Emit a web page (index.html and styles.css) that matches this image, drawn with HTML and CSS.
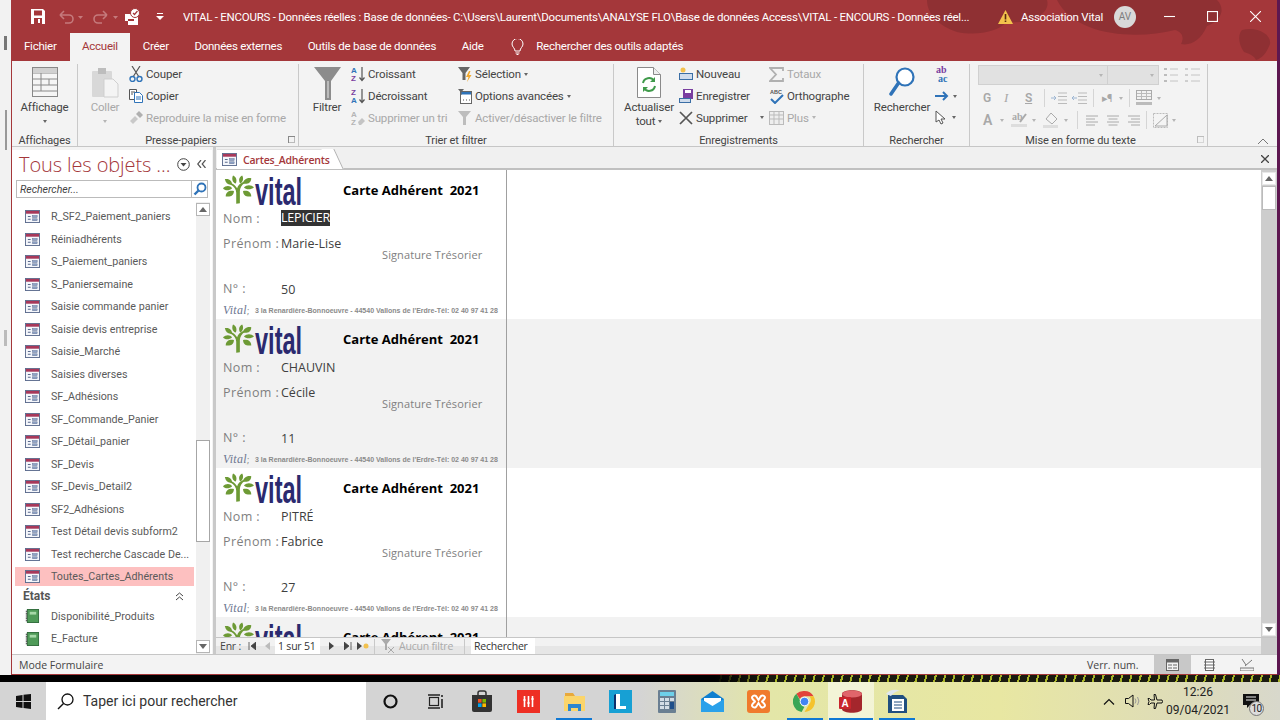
FILE: index.html
```html
<!DOCTYPE html>
<html lang="fr">
<head>
<meta charset="utf-8">
<title>VITAL - ENCOURS</title>
<link rel="stylesheet" href="styles.css">
</head>
<body>
<svg class="defs" width="0" height="0">
  <defs>
    <symbol id="form" viewBox="0 0 16 14">
      <rect x=".5" y=".5" width="15" height="13" fill="#f4f6fb" stroke="#5a6a8c"/>
      <rect x="1" y="1" width="14" height="3" fill="#a8385a"/>
      <path d="M3 7h3M3 10h3" stroke="#5a6a8c" stroke-width="1.2"/>
      <rect x="8" y="6" width="5" height="2" fill="#8fa4c8" stroke="#5a6a8c" stroke-width=".5"/>
      <rect x="8" y="9.5" width="5" height="2" fill="#8fa4c8" stroke="#5a6a8c" stroke-width=".5"/>
    </symbol>
    <symbol id="report" viewBox="0 0 14 15">
      <rect x="1.5" y=".5" width="12" height="14" fill="#4f9a58" stroke="#2f6b3a"/>
      <path d="M4 3h7v3H4z" fill="#a7d8a8"/>
      <path d="M.5 2v11" stroke="#333" stroke-dasharray="1 1" stroke-width="1.4"/>
    </symbol>
    <symbol id="tree" viewBox="0 0 34 32">
      <path d="M14.500 31V19C14.500 15 12 12 8 10l1-1.500c3 1 5 3 6.500 5.500 1-3 3-5 7-7l1 1.500c-3 2-5 5-5 9v13z" fill="#6d9a35"/>
      <path d="M11 0c3 1 5 5 3 9-3-1-5-5-3-9zM2 4c5-1 8 2 8 6-4 1-7-1-8-6zM0 14c3-3 8-3 10 0-3 3-8 3-10 0zM3 23c0-5 4-7 9-6 0 5-4 7-9 6zM21 0c2 3 1 7-2 9-2-3-2-7 2-9zM31 3c0 5-4 7-9 6 0-4 4-7 9-6zM34 13c-3 3-9 3-11 0 3-3 8-3 11 0zM31 23c-5 1-9-1-9-6 5-1 9 1 9 6z" fill="#6d9a35"/>
    </symbol>
    <symbol id="tri-up" viewBox="0 0 10 6"><path d="M5 0l5 6H0z" fill="#666"/></symbol>
    <symbol id="tri-down" viewBox="0 0 10 6"><path d="M0 0h10L5 6z" fill="#666"/></symbol>
  </defs>
</svg>

<div class="screen">
  <div class="desktop">
    <div class="back-app"><span class="speck speck-a"></span><span class="speck speck-b"></span><span class="speck speck-c"></span></div>

    <div class="window">
      <div class="head">
        <svg class="head-art" width="420" height="61" viewBox="0 0 420 61">
          <path d="M70 0h120c4 14-16 24-40 22-10 10-30 14-50 10C82 26 70 14 70 0zM200 0h160c8 8 6 20-10 26-6 14-16 20-26 18 4-8 0-12-6-14-40 10-100 6-118-30zM385 30c14-4 30 4 28 14-4 10-8 14-14 16-2-4-6-6-12-8-6-8-6-18-2-22z" fill="#8f3033"/>
        </svg>
        <div class="titlebar">
          <div class="qat">
            <svg class="qat-save" width="14" height="15" viewBox="0 0 14 15"><path d="M0 0h12l2 2v13H0z" fill="#fff"/><rect x="3" y="1.5" width="8" height="5" fill="#a4373a"/><rect x="3" y="9" width="8" height="6" fill="#a4373a"/><rect x="7" y="10" width="2" height="4" fill="#fff"/></svg>
            <svg class="qat-undo" width="30" height="14" viewBox="0 0 30 14"><path d="M2 5h9a4 4 0 0 1 0 8H7M2 5l4-4M2 5l4 4" fill="none" stroke="#c57a7c" stroke-width="1.6"/><path d="M20 6h5l-2.500 3z" fill="#c57a7c"/></svg>
            <svg class="qat-redo" width="30" height="14" viewBox="0 0 30 14"><path d="M14 5H5a4 4 0 0 0 0 8h4M14 5l-4-4M14 5l-4 4" fill="none" stroke="#c57a7c" stroke-width="1.600"/><path d="M20 6h5l-2.500 3z" fill="#c57a7c"/></svg>
            <svg class="qat-touch" width="18" height="18" viewBox="0 0 18 18"><path d="M2 6h8v3h5v8H5v-4H2z" fill="#fff"/><circle cx="12" cy="5" r="4.500" fill="#fff" stroke="#a4373a"/><path d="M10 5l1.500 1.500L14.500 3" fill="none" stroke="#a4373a" stroke-width="1.200"/><rect x="5" y="11" width="6" height="2" fill="#a4373a"/></svg>
            <svg class="qat-more" width="8" height="7" viewBox="0 0 8 7"><path d="M1 0h6v1H1zM0 3h8L4 7z" fill="#fff"/></svg>
          </div>
          <div class="doc-title">VITAL - ENCOURS - Données réelles : Base de données- C:\Users\Laurent\Documents\ANALYSE FLO\Base de données Access\VITAL - ENCOURS - Données réel...</div>
          <svg class="warn" width="15" height="14" viewBox="0 0 15 14"><path d="M7.500 0L15 14H0z" fill="#f3c34c"/><path d="M6.700 4h1.600v5.500H6.700zM6.700 10.500h1.600V12H6.700z" fill="#5a2a10"/></svg>
          <div class="account">Association Vital</div>
          <div class="avatar">AV</div>
          <div class="winctl">
            <svg width="10" height="10" viewBox="0 0 10 10"><path d="M0 5h10" stroke="#fff"/></svg>
            <svg width="10" height="10" viewBox="0 0 10 10"><rect x=".5" y=".5" width="9" height="9" fill="none" stroke="#fff"/></svg>
            <svg width="10" height="10" viewBox="0 0 10 10"><path d="M0 0l10 10M10 0L0 10" stroke="#fff"/></svg>
          </div>
        </div>
        <div class="tabs">
          <div class="tab tab-file">Fichier</div>
          <div class="tab tab-on">Accueil</div>
          <div class="tab">Créer</div>
          <div class="tab">Données externes</div>
          <div class="tab">Outils de base de données</div>
          <div class="tab">Aide</div>
          <svg class="bulb" width="13" height="16" viewBox="0 0 13 16"><path d="M4 12c0-3-3-4-3-7a5.500 5.500 0 0 1 11 0c0 3-3 4-3 7zM4.500 14h4M5.500 15.500h2" fill="none" stroke="#fff"/></svg>
          <div class="tab tab-tell">Rechercher des outils adaptés</div>
        </div>
      </div>

      <div class="ribbon">
        <section class="group g-views">
          <div class="group-body">
            <div class="big big-views">
              <div class="big-icon">
                <svg width="26" height="30" viewBox="0 0 26 30"><rect x=".5" y=".5" width="25" height="29" fill="#f5f5f5" stroke="#888"/><path d="M1 6h24M1 12h24M1 18h24M1 24h24M9 6v18M17 12v6" stroke="#888"/><rect x="1" y="1" width="24" height="5" fill="#d0d0d0"/></svg>
              </div>
              <div class="big-label">Affichage</div>
              <span class="caret caret-line"></span>
            </div>
          </div>
          <div class="group-label">Affichages</div>
        </section>

        <section class="group g-clip">
          <div class="group-body">
            <div class="big big-paste off">
              <div class="big-icon">
                <svg width="28" height="31" viewBox="0 0 28 31"><rect x="1" y="4" width="20" height="26" rx="1" fill="#d8d8d8"/><rect x="7" y="1" width="8" height="6" fill="#bdbdbd"/><path d="M13 12h9l5 5v13H13z" fill="#f4f4f4" stroke="#cfcfcf"/></svg>
              </div>
              <div class="big-label">Coller</div>
              <span class="caret caret-line caret-off"></span>
            </div>
            <div class="col col-clip">
              <div class="sm"><svg class="ic" width="14" height="16" viewBox="0 0 14 16"><path d="M3 0l7 11M11 0L4 11" stroke="#555" stroke-width="1.200"/><circle cx="3.500" cy="13" r="2.500" fill="none" stroke="#2f73b8" stroke-width="1.400"/><circle cx="10.500" cy="13" r="2.500" fill="none" stroke="#2f73b8" stroke-width="1.400"/></svg>Couper</div>
              <div class="sm"><svg class="ic" width="14" height="14" viewBox="0 0 14 14"><path d="M.5.500h7v10h-7z" fill="#fff" stroke="#555"/><path d="M5.500 3.500h5l3 3v7h-8z" fill="#fff" stroke="#2f73b8"/><path d="M2 3h4M2 5h2" stroke="#555"/><path d="M7 8h5M7 10h5" stroke="#2f73b8"/></svg>Copier</div>
              <div class="sm off"><svg class="ic" width="14" height="14" viewBox="0 0 14 14"><path d="M1 10l5-5 3 3-5 5z" fill="#c9c9c9"/><path d="M7 3l3-3 4 4-3 3z" fill="#b0b0b0"/></svg>Reproduire la mise en forme</div>
            </div>
          </div>
          <div class="group-label">Presse-papiers<span class="launcher"></span></div>
        </section>

        <section class="group g-sort">
          <div class="group-body">
            <div class="big big-filter">
              <div class="big-icon">
                <svg width="27" height="33" viewBox="0 0 27 33"><path d="M0 0h27L17 14v19h-6V14z" fill="#8c8c8c"/><path d="M13 14h2v17h-2z" fill="#bbb"/></svg>
              </div>
              <div class="big-label">Filtrer</div>
            </div>
            <div class="col col-sort">
              <div class="sm"><svg class="ic" width="14" height="16" viewBox="0 0 14 16"><text class="az az-blue" x="0" y="7">A</text><text class="az az-purple" x="0" y="15">Z</text><path d="M11 1v13M8.500 11.500L11 14.500l2.500-3" fill="none" stroke="#555" stroke-width="1.200"/></svg>Croissant</div>
              <div class="sm"><svg class="ic" width="14" height="16" viewBox="0 0 14 16"><text class="az az-purple" x="0" y="7">Z</text><text class="az az-blue" x="0" y="15">A</text><path d="M11 1v13M8.500 11.500L11 14.500l2.500-3" fill="none" stroke="#555" stroke-width="1.200"/></svg>Décroissant</div>
              <div class="sm off"><svg class="ic" width="14" height="16" viewBox="0 0 14 16"><text class="az az-grey" x="0" y="7">A</text><text class="az az-grey" x="0" y="15">Z</text><path d="M7 12l4-4 3 3-4 4H8z" fill="#c4c4c4"/></svg>Supprimer un tri</div>
            </div>
            <div class="col col-filter">
              <div class="sm"><svg class="ic" width="14" height="15" viewBox="0 0 14 15"><path d="M0 0h12L7.500 6v7h-3V6z" fill="#666"/><path d="M11 4L8 10h2.500L9 15l4.500-7H11l1.500-4z" fill="#f0a830"/></svg>Sélection<span class="caret"></span></div>
              <div class="sm"><svg class="ic" width="14" height="15" viewBox="0 0 14 15"><rect x="2.500" y="2.500" width="11" height="12" fill="#fff" stroke="#666"/><rect x="3" y="3" width="10" height="2.500" fill="#2f73b8"/><path d="M0 0h6L3.500 3v3h-1V3z" fill="#666"/><path d="M5 11h1M8 11h1M11 11h1" stroke="#555"/></svg>Options avancées<span class="caret"></span></div>
              <div class="sm off"><svg class="ic" width="14" height="15" viewBox="0 0 14 15"><path d="M0 1h13L8 7v8H5V7z" fill="#bdbdbd"/></svg>Activer/désactiver le filtre</div>
            </div>
          </div>
          <div class="group-label">Trier et filtrer</div>
        </section>

        <section class="group g-records">
          <div class="group-body">
            <div class="big big-refresh">
              <div class="big-icon">
                <svg width="24" height="31" viewBox="0 0 24 31"><path d="M.5.500h16l7 7v23H.500z" fill="#fff" stroke="#8a8a8a"/><path d="M16.500.5v7h7" fill="#eee" stroke="#8a8a8a"/><path d="M6 16a6 6 0 0 1 11-2M18 19a6 6 0 0 1-11 2" fill="none" stroke="#3f9a4a" stroke-width="2"/><path d="M18 10v5h-5zM6 25v-5h5z" fill="#3f9a4a"/></svg>
              </div>
              <div class="big-label">Actualiser</div>
              <div class="big-label">tout<span class="caret"></span></div>
            </div>
            <div class="col col-rec">
              <div class="sm"><svg class="ic" width="14" height="14" viewBox="0 0 14 14"><rect x=".5" y="6.500" width="13" height="6" fill="#cfdcec" stroke="#3a6ea5"/><circle cx="4" cy="3" r="2.500" fill="#f2c14e"/></svg>Nouveau</div>
              <div class="sm"><svg class="ic" width="14" height="15" viewBox="0 0 14 15"><rect x="4" y="0" width="10" height="10" fill="#7a3fa0"/><rect x="6" y="1" width="6" height="3" fill="#fff"/><rect x=".5" y="9.500" width="11" height="4" fill="#cfdcec" stroke="#3a6ea5"/></svg>Enregistrer</div>
              <div class="sm"><svg class="ic" width="14" height="14" viewBox="0 0 14 14"><path d="M1 1l12 12M13 1L1 13" stroke="#555" stroke-width="1.700"/></svg>Supprimer<span class="caret caret-far"></span></div>
            </div>
            <div class="col col-tot">
              <div class="sm off"><svg class="ic ic-wide" width="15" height="15" viewBox="0 0 15 15"><path d="M14 4V1H1l6 6.500L1 14h13v-3" fill="none" stroke="#b0b0b0" stroke-width="1.800"/></svg>Totaux</div>
              <div class="sm"><svg class="ic ic-wide" width="15" height="16" viewBox="0 0 15 16"><text class="abc" x="1" y="6">ABC</text><path d="M2 11l4 4 8-8" fill="none" stroke="#2f73b8" stroke-width="2"/></svg>Orthographe</div>
              <div class="sm off"><svg class="ic ic-wide" width="15" height="14" viewBox="0 0 15 14"><rect x=".5" y=".5" width="14" height="13" fill="#eee" stroke="#bbb"/><path d="M1 4h13M1 8h13M5 1v12M10 1v12" stroke="#bbb"/></svg>Plus<span class="caret caret-off"></span></div>
            </div>
          </div>
          <div class="group-label">Enregistrements</div>
        </section>

        <section class="group g-find">
          <div class="group-body">
            <div class="big big-find">
              <div class="big-icon">
                <svg width="26" height="33" viewBox="0 0 26 33"><circle cx="16" cy="10" r="8.500" fill="#fff" stroke="#2f73b8" stroke-width="2.200"/><path d="M9.500 16L2 27" stroke="#2f73b8" stroke-width="3.500" stroke-linecap="round"/></svg>
              </div>
              <div class="big-label">Rechercher</div>
            </div>
            <div class="col col-find">
              <div class="sm"><svg width="15" height="18" viewBox="0 0 15 18"><text class="abt abt-p" x="1" y="8">ab</text><text class="abt abt-b" x="3" y="17">ac</text></svg></div>
              <div class="sm"><svg width="15" height="10" viewBox="0 0 15 10"><path d="M0 5h12M8 1l4 4-4 4" fill="none" stroke="#2f73b8" stroke-width="2"/></svg><span class="caret"></span></div>
              <div class="sm"><svg width="11" height="15" viewBox="0 0 11 15"><path d="M1 1v11l3-2 2 4 2-1-2-4h4z" fill="#fff" stroke="#555"/></svg><span class="caret caret-wide"></span></div>
            </div>
          </div>
          <div class="group-label">Rechercher</div>
        </section>

        <section class="group g-format">
          <div class="group-body">
            <div class="fmt">
              <div class="fmt-top">
                <div class="combo combo-font"><span class="caret caret-off"></span></div>
                <div class="combo combo-size"><span class="caret caret-off"></span></div>
                <svg class="lists" width="36" height="16" viewBox="0 0 36 16"><path d="M0 2h3M0 8h3M0 14h3" stroke="#aaa" stroke-width="1.500"/><path d="M6 2h8M6 8h8M6 14h8M27 2h9M27 8h9M27 14h9" stroke="#c4c4c4"/><path d="M21 2h3M21 8h3M21 14h3" stroke="#aaa"/></svg>
              </div>
              <div class="fmt-row fmt-row-2">
                <span class="fmt-g">G</span><span class="fmt-i">I</span><span class="fmt-s">S</span>
                <i class="fmt-sep"></i>
                <svg width="36" height="13" viewBox="0 0 36 13"><path d="M7 1h9M7 4.500h9M7 8h9M7 11.500h9M27 1h9M27 4.500h9M27 8h9M27 11.500h9" stroke="#bbb"/><path d="M0 6h5M3 4l2 2-2 2M26 6h-5M23 4l-2 2 2 2" fill="none" stroke="#9db6d3"/></svg>
                <i class="fmt-sep"></i>
                <span class="fmt-para">▸¶</span><span class="caret caret-off caret-m8"></span>
                <i class="fmt-sep"></i>
                <svg width="18" height="16" viewBox="0 0 18 16"><rect x=".5" y=".5" width="15" height="9" fill="#f2f2f2" stroke="#aaa"/><path d="M1 3.500h14M1 6.500h14M5.500 1v8M10.500 1v8" stroke="#bbb"/><rect y="12" width="16" height="3" fill="#bbb"/></svg><span class="caret caret-off"></span>
              </div>
              <div class="fmt-row fmt-row-3">
                <span class="fmt-a">A</span><span class="caret caret-off caret-m8"></span>
                <svg width="18" height="16" viewBox="0 0 18 16"><text class="abt abt-g" x="1" y="8">ab</text><path d="M9 10l6-8" stroke="#aaa" stroke-width="2"/><rect y="12" width="16" height="3" fill="#ddd"/></svg><span class="caret caret-off"></span>
                <svg width="18" height="16" viewBox="0 0 18 16"><path d="M3 7l5-6 6 6-5 5z" fill="#f4f4f4" stroke="#aaa"/><rect y="13" width="15" height="3" fill="#ddd"/></svg><span class="caret caret-off"></span>
                <i class="fmt-sep fmt-sep-a"></i>
                <svg class="align" width="54" height="11" viewBox="0 0 54 11"><path d="M0 1h12M0 4h9M0 7h12M0 10h9M21 1h12M22.500 4h9M21 7h12M22.500 10h9M42 1h12M45 4h9M42 7h12M45 10h9" stroke="#aaa"/></svg>
                <i class="fmt-sep"></i>
                <svg class="fmt-borders" width="16" height="15" viewBox="0 0 16 15"><rect x=".5" y=".5" width="14" height="14" fill="#f4f4f4" stroke="#bbb" stroke-dasharray="2 1"/><path d="M2 13L14 2M14 2v11H2" fill="none" stroke="#aaa"/></svg><span class="caret caret-off"></span>
              </div>
            </div>
          </div>
          <div class="group-label">Mise en forme du texte<span class="launcher launcher-off"></span></div>
        </section>

        <svg class="collapse" width="10" height="6" viewBox="0 0 10 6"><path d="M0 6l5-5 5 5" fill="none" stroke="#777"/></svg>
      </div>

      <div class="workspace">
        <aside class="nav">
          <div class="nav-head">
            <div class="nav-title">Tous les objets ...</div>
            <svg class="nav-menu" width="13" height="13" viewBox="0 0 13 13"><circle cx="6.500" cy="6.500" r="5.800" fill="none" stroke="#444"/><path d="M3.500 5h6l-3 3.500z" fill="#444"/></svg>
            <svg class="nav-shut" width="9" height="8" viewBox="0 0 9 8"><path d="M4 0L.7 4 4 8M8.500 0L5.200 4l3.300 4" fill="none" stroke="#555" stroke-width="1.200"/></svg>
          </div>
          <div class="nav-search">
            <div class="nav-search-text">Rechercher...</div>
            <div class="nav-search-btn"><svg width="14" height="14" viewBox="0 0 14 14"><circle cx="8.500" cy="5.500" r="4" fill="none" stroke="#2f73b8" stroke-width="1.800"/><path d="M5.500 8.500L1.500 12.500" stroke="#2f73b8" stroke-width="2.400"/></svg></div>
          </div>
          <div class="nav-body">
            <div class="nav-list">
              <div class="nav-item"><svg class="nav-ic" width="15" height="13"><use href="#form"/></svg>R_SF2_Paiement_paniers</div>
              <div class="nav-item"><svg class="nav-ic" width="15" height="13"><use href="#form"/></svg>Réiniadhérents</div>
              <div class="nav-item"><svg class="nav-ic" width="15" height="13"><use href="#form"/></svg>S_Paiement_paniers</div>
              <div class="nav-item"><svg class="nav-ic" width="15" height="13"><use href="#form"/></svg>S_Paniersemaine</div>
              <div class="nav-item"><svg class="nav-ic" width="15" height="13"><use href="#form"/></svg>Saisie commande panier</div>
              <div class="nav-item"><svg class="nav-ic" width="15" height="13"><use href="#form"/></svg>Saisie devis entreprise</div>
              <div class="nav-item"><svg class="nav-ic" width="15" height="13"><use href="#form"/></svg>Saisie_Marché</div>
              <div class="nav-item"><svg class="nav-ic" width="15" height="13"><use href="#form"/></svg>Saisies diverses</div>
              <div class="nav-item"><svg class="nav-ic" width="15" height="13"><use href="#form"/></svg>SF_Adhésions</div>
              <div class="nav-item"><svg class="nav-ic" width="15" height="13"><use href="#form"/></svg>SF_Commande_Panier</div>
              <div class="nav-item"><svg class="nav-ic" width="15" height="13"><use href="#form"/></svg>SF_Détail_panier</div>
              <div class="nav-item"><svg class="nav-ic" width="15" height="13"><use href="#form"/></svg>SF_Devis</div>
              <div class="nav-item"><svg class="nav-ic" width="15" height="13"><use href="#form"/></svg>SF_Devis_Detail2</div>
              <div class="nav-item"><svg class="nav-ic" width="15" height="13"><use href="#form"/></svg>SF2_Adhésions</div>
              <div class="nav-item"><svg class="nav-ic" width="15" height="13"><use href="#form"/></svg>Test Détail devis subform2</div>
              <div class="nav-item"><svg class="nav-ic" width="15" height="13"><use href="#form"/></svg>Test recherche Cascade De...</div>
              <div class="nav-item nav-item-on"><svg class="nav-ic" width="15" height="13"><use href="#form"/></svg>Toutes_Cartes_Adhérents</div>
              <div class="nav-section"><span>États</span><svg class="nav-fold" width="9" height="9" viewBox="0 0 9 9"><path d="M1 4l3.500-3L8 4M1 8l3.500-3L8 8" fill="none" stroke="#444"/></svg></div>
              <div class="nav-item"><svg class="nav-ic" width="13" height="14"><use href="#report"/></svg>Disponibilité_Produits</div>
              <div class="nav-item"><svg class="nav-ic" width="13" height="14"><use href="#report"/></svg>E_Facture</div>
              <div class="nav-item"><svg class="nav-ic" width="13" height="14"><use href="#report"/></svg></div>
            </div>
            <div class="vbar vbar-nav">
              <div class="vbtn"><svg width="8" height="5"><use href="#tri-up"/></svg></div>
              <div class="vtrack vtrack-nav"><div class="vthumb vthumb-nav"></div></div>
              <div class="vbtn"><svg width="8" height="5"><use href="#tri-down"/></svg></div>
            </div>
          </div>
        </aside>
        <div class="splitter"></div>

        <main class="main">
          <div class="doc-tabs">
            <div class="doc-tab"><svg width="15" height="13"><use href="#form"/></svg><span>Cartes_Adhérents</span></div>
            <svg class="doc-close" width="8" height="8" viewBox="0 0 8 8"><path d="M0 0l8 8M8 0L0 8" stroke="#444" stroke-width="1.300"/></svg>
          </div>
          <div class="form-area">
            <div class="records">
              <article class="record">
                <div class="card">
                  <div class="card-head"><svg class="logo" width="80" height="32" viewBox="0 0 80 32"><use href="#tree" width="31" height="32"/><text class="logo-text" transform="translate(32 31) scale(.62 1)">vital</text></svg><div class="card-title">Carte Adhérent&nbsp; 2021</div></div>
                  <div class="field field-name"><span class="flabel">Nom :</span><span class="fval fval-sel">LEPICIER</span></div>
                  <div class="field field-first"><span class="flabel">Prénom :</span><span class="fval">Marie-Lise</span></div>
                  <div class="signature">Signature Trésorier</div>
                  <div class="field field-num"><span class="flabel">N° :</span><span class="fval fval-num">50</span></div>
                  <div class="card-foot"><span class="foot-vital">Vital</span><span class="foot-sep">;</span><span class="foot-addr">3 la Renardière-Bonnoeuvre - 44540 Vallons de l'Erdre-Tél: 02 40 97 41 28</span></div>
                </div>
              </article>
              <article class="record record-alt">
                <div class="card">
                  <div class="card-head"><svg class="logo" width="80" height="32" viewBox="0 0 80 32"><use href="#tree" width="31" height="32"/><text class="logo-text" transform="translate(32 31) scale(.62 1)">vital</text></svg><div class="card-title">Carte Adhérent&nbsp; 2021</div></div>
                  <div class="field field-name"><span class="flabel">Nom :</span><span class="fval">CHAUVIN</span></div>
                  <div class="field field-first"><span class="flabel">Prénom :</span><span class="fval">Cécile</span></div>
                  <div class="signature">Signature Trésorier</div>
                  <div class="field field-num"><span class="flabel">N° :</span><span class="fval fval-num">11</span></div>
                  <div class="card-foot"><span class="foot-vital">Vital</span><span class="foot-sep">;</span><span class="foot-addr">3 la Renardière-Bonnoeuvre - 44540 Vallons de l'Erdre-Tél: 02 40 97 41 28</span></div>
                </div>
              </article>
              <article class="record">
                <div class="card">
                  <div class="card-head"><svg class="logo" width="80" height="32" viewBox="0 0 80 32"><use href="#tree" width="31" height="32"/><text class="logo-text" transform="translate(32 31) scale(.62 1)">vital</text></svg><div class="card-title">Carte Adhérent&nbsp; 2021</div></div>
                  <div class="field field-name"><span class="flabel">Nom :</span><span class="fval">PITRÉ</span></div>
                  <div class="field field-first"><span class="flabel">Prénom :</span><span class="fval">Fabrice</span></div>
                  <div class="signature">Signature Trésorier</div>
                  <div class="field field-num"><span class="flabel">N° :</span><span class="fval fval-num">27</span></div>
                  <div class="card-foot"><span class="foot-vital">Vital</span><span class="foot-sep">;</span><span class="foot-addr">3 la Renardière-Bonnoeuvre - 44540 Vallons de l'Erdre-Tél: 02 40 97 41 28</span></div>
                </div>
              </article>
              <article class="record record-alt">
                <div class="card">
                  <div class="card-head"><svg class="logo" width="80" height="32" viewBox="0 0 80 32"><use href="#tree" width="31" height="32"/><text class="logo-text" transform="translate(32 31) scale(.62 1)">vital</text></svg><div class="card-title">Carte Adhérent&nbsp; 2021</div></div>
                </div>
              </article>
            </div>
            <div class="vbar vbar-form">
              <div class="vbtn"><svg width="8" height="5"><use href="#tri-up"/></svg></div>
              <div class="vtrack"><div class="vthumb vthumb-form"></div></div>
              <div class="vbtn"><svg width="8" height="5"><use href="#tri-down"/></svg></div>
            </div>
          </div>
          <div class="recnav">
            <span class="rn-label">Enr :</span>
            <svg class="rn-first" width="8" height="8" viewBox="0 0 8 8"><path d="M1 0v8M8 0v8L3 4z" stroke="#444" fill="#444" stroke-width=".8"/></svg>
            <svg class="rn-prev" width="6" height="8" viewBox="0 0 6 8"><path d="M5 0v8L0 4z" fill="#bbb"/></svg>
            <span class="rn-box rn-pos">1 sur 51</span>
            <svg class="rn-next" width="6" height="8" viewBox="0 0 6 8"><path d="M0 0v8l5-4z" fill="#444"/></svg>
            <svg class="rn-last" width="8" height="8" viewBox="0 0 8 8"><path d="M7 0v8M0 0v8l5-4z" stroke="#444" fill="#444" stroke-width=".8"/></svg>
            <svg class="rn-new" width="12" height="8" viewBox="0 0 12 8"><path d="M0 0v8l5-4z" fill="#444"/><circle cx="9" cy="4" r="2.500" fill="#f2c14e"/></svg>
            <i class="rn-sep"></i>
            <svg class="rn-funnel" width="14" height="14" viewBox="0 0 14 14"><path d="M0 0h10L6 5v6H4V5z" fill="#aaa"/><path d="M7 8l6 6M13 8l-6 6" stroke="#aaa"/></svg>
            <span class="rn-nofilter">Aucun filtre</span>
            <i class="rn-sep"></i>
            <span class="rn-box rn-search">Rechercher</span>
            <div class="rn-track"></div>
            <div class="rn-corner"></div>
          </div>
        </main>
      </div>

      <footer class="status">
        <span class="status-mode">Mode Formulaire</span>
        <span class="status-num">Verr. num.</span>
        <div class="view view-on"><svg width="13" height="12" viewBox="0 0 13 12"><rect x=".5" y=".5" width="12" height="11" fill="#f2f2f2" stroke="#666"/><rect x="1" y="1" width="11" height="2.500" fill="#666"/><path d="M2 6h4M7 6h4M2 9h4M7 9h4" stroke="#666"/></svg></div>
        <div class="view"><svg width="11" height="12" viewBox="0 0 11 12"><rect x="1.500" y=".5" width="8" height="11" fill="#fff" stroke="#666"/><path d="M0 3h11M0 6h11M0 9h11" stroke="#666"/></svg></div>
        <div class="view"><svg width="14" height="12" viewBox="0 0 14 12"><path d="M0 9h14v3H0z" fill="none" stroke="#777"/><path d="M2 0l4 6M5 7l7-6" stroke="#777"/></svg></div>
      </footer>
    </div>
    <div class="edge"></div>
  </div>

  <div class="wall-strip"></div>

  <div class="taskbar">
    <div class="start"><svg width="15" height="15" viewBox="0 0 15 15"><path d="M0 2l6.500-1v6H0zM7.500.8L15 0v7H7.500zM0 8h6.500v6L0 13zM7.500 8H15v7l-7.500-1z" fill="#111"/></svg></div>
    <div class="search-box">
      <svg width="17" height="17" viewBox="0 0 17 17"><circle cx="10.500" cy="6.500" r="5.500" fill="none" stroke="#111" stroke-width="1.300"/><path d="M6.500 10.500L1 16" stroke="#111" stroke-width="1.500"/></svg>
      <span>Taper ici pour rechercher</span>
    </div>
    <div class="task task-w"><svg width="15" height="15" viewBox="0 0 15 15"><circle cx="7.500" cy="7.500" r="6" fill="none" stroke="#111" stroke-width="2.200"/></svg></div>
    <div class="task"><svg width="16" height="15" viewBox="0 0 16 15"><rect x="1.500" y="3.500" width="9" height="8" fill="none" stroke="#222" stroke-width="1.200"/><path d="M0 1h12M0 14h12" stroke="#222" stroke-width="1.400"/><path d="M14 1v2M14 5v9" stroke="#222" stroke-width="1.600"/></svg></div>
    <div class="task"><svg width="22" height="22" viewBox="0 0 22 22"><path d="M7 6V3a2 2 0 0 1 2-2h4a2 2 0 0 1 2 2v3" fill="none" stroke="#333" stroke-width="1.500"/><path d="M1 5h20v15a2 2 0 0 1-2 2H3a2 2 0 0 1-2-2z" fill="#333"/><rect x="7" y="9" width="3.600" height="3.600" fill="#f25022"/><rect x="11.400" y="9" width="3.600" height="3.600" fill="#7fba00"/><rect x="7" y="13.400" width="3.600" height="3.600" fill="#00a4ef"/><rect x="11.400" y="13.400" width="3.600" height="3.600" fill="#ffb900"/></svg></div>
    <div class="task"><svg width="23" height="23" viewBox="0 0 23 23"><rect width="23" height="23" fill="#ee2f24"/><path d="M7.500 6v11M11.500 6v11M15.500 6v11" stroke="#fff" stroke-width="1.600"/><path d="M6 10h3M10 13h3M14 9h3" stroke="#fff" stroke-width="1.200"/></svg></div>
    <div class="task task-run"><svg width="21" height="19" viewBox="0 0 21 19"><path d="M1 1h8l2 3H1z" fill="#e8a93c"/><path d="M0 4h21v15H0z" fill="#fbd56b"/><path d="M4 12h13v7h-3v-3H7v3H4z" fill="#2d86cf"/></svg></div>
    <div class="task"><svg width="23" height="23" viewBox="0 0 23 23"><rect width="23" height="23" fill="#17a0d4"/><path d="M7 4h4v12h6v3H7z" fill="#fff"/><path d="M5 5l2-1v15H5z" fill="#0d2f6b"/></svg></div>
    <div class="task"><svg width="18" height="23" viewBox="0 0 18 23"><rect width="18" height="23" rx="1" fill="#6a7f92"/><rect x="2" y="2" width="14" height="4" fill="#6ed0ea"/><path d="M2 8h4v3H2zM7 8h4v3H7zM12 8h4v3h-4zM2 12h4v3H2zM7 12h4v3H7zM2 16h4v3H2zM7 16h4v3H7z" fill="#d3dde6"/><rect x="12" y="12" width="4" height="7" fill="#1f4f8a"/></svg></div>
    <div class="task"><svg width="23" height="21" viewBox="0 0 23 21"><path d="M0 8L11.500 0 23 8v13H0z" fill="#0f7fd0"/><path d="M3 7h17v5l-8.500 5L3 12z" fill="#fff"/><path d="M0 8l11.500 7L23 8v13H0z" fill="#2aa1ea"/></svg></div>
    <div class="task"><svg width="23" height="23" viewBox="0 0 23 23"><rect width="23" height="23" rx="3" fill="#f07a2c"/><path d="M6 6c3-2 4 2 5.500 4C13 8 14 4 17 6c3 2-2 5-2 5.500S20 15 17 17s-4-2-5.500-4C10 15 9 19 6 17s2-5 2-5.500S3 8 6 6z" fill="none" stroke="#fff" stroke-width="2"/></svg></div>
    <div class="task task-run"><svg width="23" height="23" viewBox="0 0 24 24"><path d="M12 1a11 11 0 0 1 9.500 5.500H12a5.500 5.500 0 0 0-5 3L3.500 4A11 11 0 0 1 12 1z" fill="#e2433a"/><path d="M21.500 6.500A11 11 0 0 1 12 23l5-8.500a5.500 5.500 0 0 0 0-8z" fill="#f5c32c"/><path d="M3.500 4L8 12a5 5 0 0 0 4 5.500L9 23A11 11 0 0 1 3.500 4z" fill="#3aa655"/><circle cx="12" cy="12" r="4.500" fill="#4285f4" stroke="#fff"/></svg></div>
    <div class="task task-run task-active"><svg width="23" height="23" viewBox="0 0 23 23"><path d="M3 4c0-5 20-5 20 0v15c0 5-20 5-20 0z" fill="#a4262c"/><ellipse cx="13" cy="4" rx="10" ry="3.500" fill="#e0656b"/><rect y="7" width="12" height="12" rx="1" fill="#c9252d"/><text class="access-a" x="6" y="17" text-anchor="middle">A</text></svg></div>
    <div class="task task-run"><svg width="22" height="24" viewBox="0 0 22 24"><path d="M2 6h15l4 4v14H2z" fill="#204f80"/><path d="M6 10h12v12H6z" fill="#fff"/><path d="M8 13h8M8 16h8M8 19h8" stroke="#204f80"/><path d="M0 5c4-5 10-5 14-3-4 0-7 2-9 5z" fill="#dfe7ef"/></svg></div>
    <div class="tray">
      <svg class="tray-up" width="12" height="7" viewBox="0 0 12 7"><path d="M1 6.500l5-5 5 5" fill="none" stroke="#111" stroke-width="1.200"/></svg>
      <svg class="tray-vol" width="15" height="14" viewBox="0 0 15 14"><path d="M.5 4.500h3L8 1v12L3.500 9.500h-3z" fill="none" stroke="#111"/><path d="M10 4.500a4 4 0 0 1 0 5M12.500 3a7 7 0 0 1 0 8" fill="none" stroke="#999"/></svg>
      <svg class="tray-air" width="16" height="15" viewBox="0 0 16 15"><path d="M7 .5h1.500L10 6h5l.5 1.500L15 9h-5l-1.500 5.500H7L7.500 9H4l-1.500 1.500H1L2 7.500 1 4.500h1.500L4 6h3.500z" fill="none" stroke="#111"/></svg>
      <div class="clock"><div>12:26</div><div>09/04/2021</div></div>
      <div class="notif"><svg width="16" height="15" viewBox="0 0 16 15"><path d="M0 0h16v11H7l-3 3v-3H0z" fill="#111"/><path d="M3 3h10M3 6h10" stroke="#eee"/></svg><span class="notif-count">10</span></div>
    </div>
  </div>
</div>
</body>
</html>
```

FILE: styles.css
```css
* { box-sizing: border-box; }
html, body { margin: 0; padding: 0; }
body {
  width: 1280px; height: 720px; overflow: hidden; background: #000;
  font-family: Roboto, "Open Sans", sans-serif; font-size: 11.500px; letter-spacing: -.25px; color: #444;
}
.defs { position: absolute; }
.screen { width: 1280px; height: 720px; display: flex; flex-direction: column; }
.desktop { height: 675px; display: flex; }

.back-app { width: 11px; background: #f2f2f2; display: flex; flex-direction: column; align-items: center; padding-top: 36px; gap: 60px; }
.speck { width: 3px; height: 14px; background: #777; }
.speck-b { background: #999; height: 40px; width: 2px; }
.speck-c { height: 16px; margin-top: 120px; background: #bbb; }
.edge { width: 3px; background: #5d1750; }
.window { width: 1266px; display: flex; flex-direction: column; border-left: 1px solid #a4373a; border-bottom: 1px solid #a4373a; background: #f3f3f3; }

.head { height: 61px; background: #a4373a; position: relative; flex: none; }
.head-art { position: absolute; right: 0; top: 0; }
.titlebar { height: 33px; display: flex; align-items: center; position: relative; color: #fff; }
.qat { display: flex; align-items: center; width: 171px; flex: none; padding-left: 19px; }
.qat-undo { margin-left: 13px; }
.qat-redo { margin-left: 5px; }
.qat-more { margin-left: 15px; }
.doc-title { width: 806px; flex: none; white-space: nowrap; overflow: hidden; }
.warn { flex: none; margin-left: 9px; }
.account { margin-left: 8px; width: 82px; white-space: nowrap; flex: none; }
.avatar { width: 22px; height: 22px; margin-left: 11px; border-radius: 50%; background: #d9d9d9; color: #7d7d7d; font-size: 10px; line-height: 22px; text-align: center; flex: none; letter-spacing: 0; }
.winctl { display: flex; margin-left: 28px; gap: 32px; }
.winctl svg { width: 11px; height: 11px; }

.tabs { height: 28px; display: flex; position: relative; align-items: stretch; color: #fff; }
.tab { padding: 0 12.750px; line-height: 27px; white-space: nowrap; }
.tab-file { width: 58px; padding: 0 0 0 12px; }
.tab-on { background: #f3f3f3; color: #a4373a; width: 60px; text-align: center; padding: 0; }
.bulb { align-self: center; margin: 0 0 0 15px; }
.tab-tell { padding-left: 12px; }

.ribbon { height: 86px; flex: none; display: flex; position: relative; background: #f3f3f3; border-bottom: 1px solid #c6c6c6; padding-top: 3px; letter-spacing: -.15px; }
.group { display: flex; flex-direction: column; border-right: 1px solid #c9c9c9; height: 82px; flex: none; }
.g-views { width: 66px; }
.g-clip { width: 221px; }
.g-sort { width: 315px; }
.g-records { width: 250px; }
.g-find { width: 106px; }
.g-format { width: 238px; }
.group-body { height: 69px; flex: none; display: flex; }
.group-label { height: 13px; line-height: 16px; text-align: center; position: relative; font-size: 11px; letter-spacing: -.1px; flex: none; }
.g-clip .group-label { padding-right: 14px; }
.g-format .group-label { padding-right: 16px; }
.launcher { position: absolute; right: 3px; top: 3px; width: 7px; height: 7px; border: 1px solid #888; border-width: 1px 0 0 1px; box-shadow: inset -1px -1px 0 #bbb; }
.launcher-off { opacity: .5; }
.collapse { position: absolute; right: 9px; top: 77px; }

.big { display: flex; flex-direction: column; align-items: center; flex: none; padding-top: 3px; }
.big-icon { height: 33px; display: flex; justify-content: center; align-items: flex-start; }
.big-label { line-height: 14px; height: 14px; white-space: nowrap; }
.big-views { width: 65px; }
.big-paste { width: 40px; margin-left: 7px; }
.big-filter { width: 30px; margin-left: 13px; }
.big-refresh { width: 52px; margin-left: 9px; }
.big-find { width: 60px; margin-left: 8px; }
.off, .off .big-label { color: #a8a8a8; }
.col { display: flex; flex-direction: column; flex: none; margin-top: -.5px; }
.col-clip { margin-left: 4px; }
.col-sort { margin-left: 9px; width: 107px; }
.col-filter { width: 150px; }
.col-rec { margin-left: 4px; width: 90px; }
.col-tot { width: 85px; }
.col-find { margin-left: 3px; }
.sm { height: 21.700px; display: flex; align-items: center; white-space: nowrap; }
.ic { margin-right: 3px; flex: none; }
.ic-wide { margin-right: 3px; }
.caret { display: inline-block; width: 0; height: 0; margin-left: 3px; border: 2.500px solid transparent; border-top: 3px solid #666; border-bottom: 0; flex: none; vertical-align: middle; }
.caret-line { margin: 6px 0 0; }
.caret-off { border-top-color: #b5b5b5; }
.caret-far { margin-left: 12px; }
.caret-wide { margin-left: 6px; }
.caret-m8 { margin-left: 8px; }
.az { font: bold 8px "Liberation Sans", sans-serif; letter-spacing: 0; }
.az-blue { fill: #2f73b8; }
.az-purple { fill: #7a3fa0; }
.az-grey { fill: #b5b5b5; }
.abc { font: bold 5.500px "Liberation Sans", sans-serif; fill: #555; letter-spacing: 0; }
.abt { font: bold 10px "Liberation Serif", serif; letter-spacing: 0; }
.abt-p { fill: #7a3fa0; }
.abt-b { fill: #2f73b8; }
.abt-g { fill: #aaa; }
.access-a { font: bold 10px "Liberation Sans", sans-serif; fill: #fff; letter-spacing: 0; }

.fmt { margin-left: 8px; display: flex; flex-direction: column; color: #a8a8a8; padding-top: 1px; }
.fmt-top { display: flex; align-items: center; height: 20px; }
.combo { height: 20px; background: #e1e1e1; border: 1px solid #d0d0d0; display: flex; align-items: center; justify-content: flex-end; padding-right: 4px; }
.combo-font { width: 130px; }
.combo-size { width: 51px; border-left: 0; }
.lists { margin-left: 5px; }
.fmt-row { display: flex; align-items: center; height: 22px; font-weight: 600; padding-left: 5px; font-size: 12px; }
.fmt-row-2 { margin-top: 2px; }
.fmt-g, .fmt-i { width: 21px; flex: none; }
.fmt-s { width: 18px; flex: none; text-decoration: underline; }
.fmt-i { font-style: italic; font-family: "Liberation Serif", serif; font-size: 13px; font-weight: 400; }
.fmt-a { font-size: 14px; }
.fmt-sep { width: 1px; height: 18px; background: #d5d5d5; margin: 0 6px; flex: none; }
.fmt-sep-a { margin-left: 9px; }
.fmt-row-2 .fmt-sep:first-of-type { margin-left: 1px; }
.fmt-para { font-weight: 400; letter-spacing: -1px; font-size: 11px; margin-left: 2px; }
.fmt-row-3 svg { margin-left: 7px; }
.fmt-row-3 .align { margin-left: 2px; }
.fmt-row-3 .fmt-borders { margin-left: 0; }

.workspace { flex: 1; min-height: 0; display: flex; }
.nav { width: 200px; background: #fff; display: flex; flex-direction: column; flex: none; padding-left: 3px; overflow: hidden; position: relative; border-top: 3px solid #f3f3f3; }
.nav-head { height: 28px; display: flex; align-items: center; flex: none; padding-left: 4px; }
.nav-title { font-family: "Open Sans", sans-serif; font-size: 20px; font-weight: 300; color: #a4373a; width: 155px; white-space: nowrap; letter-spacing: -.1px; flex: none; }
.nav-menu { margin-left: 3px; flex: none; }
.nav-shut { margin-left: 7px; flex: none; }
.nav-search { width: 192px; height: 18px; flex: none; border: 1px solid #bbb; margin: 2px 0 0 1px; display: flex; align-items: center; }
.nav-search-text { flex: 1; font-style: italic; font-size: 10.500px; padding-left: 3px; color: #444; letter-spacing: 0; }
.nav-search-btn { width: 16px; height: 16px; border-left: 1px solid #bbb; display: flex; align-items: center; justify-content: center; }
.nav-body { flex: 1; min-height: 0; display: flex; margin-top: 4px; overflow: hidden; }
.nav-list { width: 179px; flex: none; padding-top: 5px; overflow: hidden; }
.nav-item { height: 19px; margin-bottom: 3.500px; display: flex; align-items: center; font-size: 10.700px; letter-spacing: 0; color: #5a5a5a; white-space: nowrap; padding-left: 10px; }
.nav-item-on { background: #fdc0c0; }
.nav-ic { margin-right: 11px; width: 15px; flex: none; }
.nav-section { height: 13px; margin-bottom: 4px; display: flex; align-items: center; justify-content: space-between; font-weight: 700; padding: 0 10px 0 8px; color: #555; letter-spacing: 0; font-size: 12px; }
.vbar { width: 16px; flex: none; display: flex; flex-direction: column; align-items: center; background: #cdcdcd; padding: 2px 0 1px; gap: 1px; }
.vbar-nav { width: 14px; margin-left: 2px; background: #f0f0f0; padding: 1px 0; }
.vbtn { width: 14px; height: 13px; background: #fff; border: 1px solid #b5b5b5; display: flex; align-items: center; justify-content: center; flex: none; }
.vbar-form .vbtn { border: 1px solid #e8e8e8; }
.vtrack { flex: 1; width: 100%; display: flex; flex-direction: column; align-items: center; }
.vtrack-nav { padding-top: 223px; }
.vthumb { width: 14px; background: #fff; border: 1px solid #a6a6a6; }
.vthumb-nav { height: 102px; }
.vthumb-form { height: 24px; border-color: #bbb; }
.splitter { width: 4px; flex: none; background: #c9c9c9; border-left: 1px solid #f3f3f3; }

.main { flex: 1; min-width: 0; display: flex; flex-direction: column; background: #fff; font-family: "Open Sans", sans-serif; letter-spacing: 0; }
.doc-tabs { height: 23px; flex: none; background: #f0f0f0; border-bottom: 2px solid #c0c0c0; position: relative; display: flex; align-items: flex-end; padding-left: 1px; }
.doc-tab { width: 116px; height: 20px; background: #fff; position: relative; top: 1px; display: flex; align-items: center; gap: 6px; padding-left: 5px; color: #a4373a; font-size: 10.500px; font-weight: 600; white-space: nowrap; letter-spacing: -.2px; border-top: 1px solid #e0e0e0; }
.doc-tab::after { content: ""; position: absolute; right: -6px; top: -1px; bottom: 0; width: 12px; background: #fff; border-right: 1px solid #b0b0b0; transform: skewX(25deg); }
.doc-tab span { position: relative; z-index: 1; }
.doc-close { position: absolute; right: 8px; top: 8px; }
.form-area { flex: 1; min-height: 0; display: flex; }
.records { flex: 1; min-width: 0; overflow: hidden; }
.record { height: 149px; background: #fff; overflow: hidden; }
.record-alt { background: #f2f2f2; }
.card { width: 291px; height: 149px; padding: 4px 0 0 7px; border-right: 1px solid #a0a0a0; }
.card-head { height: 32px; display: flex; align-items: center; }
.logo { flex: none; }
.logo-text { font: 700 38px "Liberation Sans", sans-serif; fill: #2b2a6f; letter-spacing: 0; }
.card-title { margin: 0 0 0 40px; font-weight: 700; font-size: 13px; color: #000; white-space: nowrap; }
.field { height: 18px; display: flex; align-items: center; font-size: 12.500px; }
.field-name { margin-top: 3px; }
.field-first { margin-top: 7.500px; }
.field-num { margin-top: 17.500px; }
.flabel { width: 58px; color: #7f7f7f; letter-spacing: .4px; flex: none; }
.fval { color: #404040; }
.fval-sel { background: #333; color: #fff; line-height: 16px; height: 16px; letter-spacing: -.2px; }
.fval-num { position: relative; top: 1px; }
.signature { height: 14px; line-height: 14px; margin-top: -4.500px; padding-left: 159px; font-size: 11px; letter-spacing: .1px; color: #808080; white-space: nowrap; }
.card-foot { height: 14px; margin-top: 5.500px; display: flex; align-items: center; white-space: nowrap; color: #808080; }
.foot-vital { font: italic 400 12px "Liberation Serif", serif; width: 24px; flex: none; color: #6d7690; letter-spacing: .3px; }
.foot-sep { width: 8px; flex: none; font-size: 9px; }
.foot-addr { font: 700 7px "Liberation Sans", sans-serif; letter-spacing: 0; color: #8a8a8a; flex: none; }

.recnav { height: 17px; flex: none; display: flex; align-items: center; background: linear-gradient(#f2f2f2 50%, #e6e6e6 50%); border-top: 1px solid #c6c6c6; font-size: 10.500px; letter-spacing: -.2px; padding-left: 4px; }
.rn-label { width: 28px; white-space: nowrap; }
.rn-prev { margin-left: 9px; }
.rn-box { background: #fff; height: 16px; line-height: 16px; padding-left: 3px; color: #333; white-space: nowrap; flex: none; }
.rn-pos { width: 45px; margin-left: 4px; }
.rn-next { margin-left: 9px; }
.rn-last { margin-left: 9px; }
.rn-new { margin-left: 5px; }
.rn-sep { width: 1px; height: 15px; background: #c9c9c9; margin-left: 5px; flex: none; }
.rn-funnel { margin-left: 6px; }
.rn-nofilter { margin-left: 4px; width: 60px; color: #aaa; white-space: nowrap; flex: none; }
.rn-search { width: 64px; margin-left: 6px; }
.rn-track { flex: 1; height: 100%; }
.rn-corner { width: 16px; height: 100%; background: #cdcdcd; }

.status { height: 20px; flex: none; display: flex; align-items: center; font-family: "Open Sans", sans-serif; font-size: 10.500px; letter-spacing: 0; border-top: 1px solid #c6c6c6; padding-left: 7px; color: #444; }
.status-mode { width: 1068px; white-space: nowrap; flex: none; }
.status-num { width: 67px; white-space: nowrap; flex: none; }
.view { width: 37px; height: 19px; display: flex; align-items: center; justify-content: center; flex: none; }
.view-on { background: #c8c8c8; }

.wall-strip { height: 7px; flex: none; background:
  linear-gradient(90deg, #000 715px, transparent 770px),
  repeating-linear-gradient(105deg, #1a1a10 0 3px, #a8b428 3px 5px, #1a1a10 5px 9px); }

.taskbar { height: 38px; flex: none; display: flex; align-items: center; background: linear-gradient(90deg, #d4d4d4 0, #d4d4d4 640px, #e3e6a8 770px, #e8e7a2 1000px, #dedcb8 1180px, #d8d8cc 1280px); position: relative; letter-spacing: 0; }
.start { width: 46px; display: flex; justify-content: center; flex: none; }
.search-box { width: 320px; height: 38px; background: #fff; display: flex; align-items: center; gap: 9px; padding-left: 11px; font-size: 14px; color: #333; flex: none; }
.task { width: 46.100px; height: 38px; display: flex; align-items: center; justify-content: center; flex: none; position: relative; }
.task-w { margin-left: 1px; }
.task-run::after { content: ""; position: absolute; left: 5px; right: 5px; bottom: 0; height: 2px; background: #0f78d4; }
.task-active { background: rgba(255,255,255,.55); }
.task-active::after { left: 1px; right: 1px; }
.tray { margin-left: auto; display: flex; align-items: center; padding-right: 21px; }
.tray-vol { margin-left: 10px; }
.tray-air { margin-left: 7px; }
.clock { width: 68px; margin-left: 1px; text-align: center; font-size: 12px; line-height: 18px; color: #222; }
.notif { position: relative; margin-left: 11px; display: flex; }
.notif-count { position: absolute; left: 6px; top: 7px; width: 15px; height: 15px; border: 1px solid #777; border-radius: 50%; font-size: 10px; line-height: 13px; text-align: center; color: #222; background: #ddd; letter-spacing: -.5px; }
```
